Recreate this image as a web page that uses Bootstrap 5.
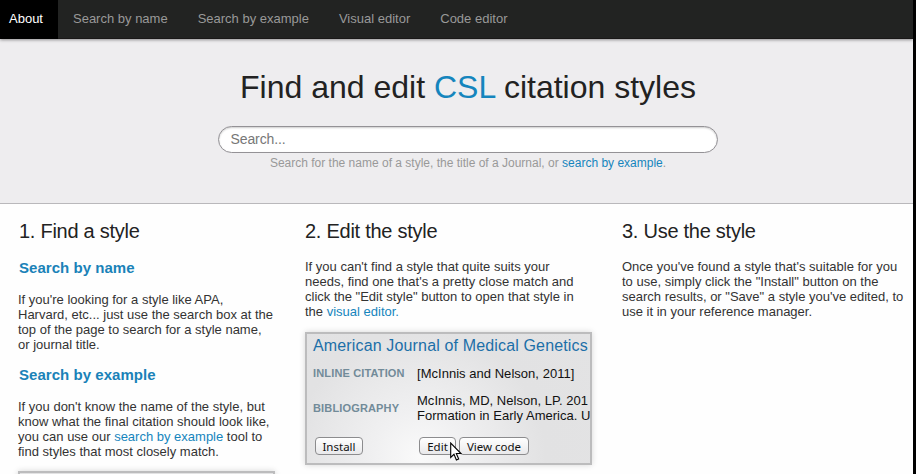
<!DOCTYPE html>
<html lang="en">
<head>
<meta charset="utf-8">
<meta name="viewport" content="width=device-width, initial-scale=1">
<title>Find and edit CSL citation styles</title>
<link href="https://cdn.jsdelivr.net/npm/bootstrap@5.3.0/dist/css/bootstrap.min.css" rel="stylesheet">
<style>
  body { font-family: "Liberation Sans", Arial, sans-serif; font-size: 13px; line-height: 15px; color: #333; background: #000; height: 474px; }
  a { color: #1585bd; text-decoration: none; }
  .page { width: 913px; height: 474px; background: #fefefe; }
  .topbar { height: 39px; background: #222322; box-shadow: 0 1px 3px rgba(0,0,0,.4); border-bottom: 1px solid #1a1818; z-index: 2; }
  .topbar .nav-link { color: #999; padding: 9px 15px 10px; line-height: 19px; white-space: nowrap; }
  .topbar .nav-link.active { color: #fff; background: #000; padding-left: 9px; height: 39px; }
  .hero { height: 165px; background: #eeedef; border-bottom: 1px solid #b9b8bb; padding: 29px 0 0 22px; }
  .hero h1 { font-size: 32px; line-height: 38px; color: #222; margin: 0 0 20px 1px; font-weight: 400; white-space: nowrap; }
  .search-box { width: 500px; height: 27px; border: 1px solid #949296; border-radius: 14px; padding: 0 11px 1px 12px; font-size: 14px; line-height: 20px; box-shadow: inset 0 1px 2px rgba(0,0,0,.2); color: #666; letter-spacing: -.1px; }
  .search-box::placeholder { color: #777; }
  .hint { font-size: 12px; line-height: 16px; color: #999; margin: 2px 0 0 1px; white-space: nowrap; }
  .steps { display: grid; grid-template-columns: 257px 287px 285px; column-gap: 30px; padding: 15px 0 0 18px; white-space: nowrap; }
  .steps h2 { font-size: 20px; line-height: 24px; margin: 0; color: #222; font-weight: 400; letter-spacing: -.26px; }
  .steps h3 { font-size: 15px; line-height: 18px; margin: 16px 0 0 1px; font-weight: 700; letter-spacing: .04px; color: #1a82b8; }
  .intro { margin: 16px 0 13px; }
  .find h2 { margin-left: 1px; }
  .find .intro { margin: 15px 0 12px; }
  .find .intro + h3 { margin-top: 14px; }
  .shot { border: 2px solid #bcbcbd; box-shadow: 0 0 6px rgba(0,0,0,.16); background: radial-gradient(circle at 40% 95%, #fafafa 0, #f0f0f1 22%, #e2e2e3 60%, #e3e3e4 100%); height: 133px; overflow: hidden; font-size: 13px; color: #111; }
  .shot-title { font-size: 16px; line-height: 20px; color: #1c6fa8; padding: 2px 0 0 6px; letter-spacing: .15px; }
  .shot-grid { display: grid; grid-template-columns: 104px 1fr; padding-left: 6px; align-items: center; letter-spacing: .03px; }
  .shot-grid.inline-row { margin-top: 10px; }
  .shot-grid.biblio-row { margin-top: 12px; }
  .field-name { font-size: 11px; font-weight: 700; color: #728b99; letter-spacing: .15px; }
  .actions { margin-top: 14px; padding-left: 8px; }
  .push { font-family: "Noto Sans", sans-serif; font-size: 11.5px; line-height: 15px; padding: 0; height: 18px; border: 1px solid #8c8c8e; border-radius: 4px; color: #111; background: linear-gradient(#fff, #e9e9eb); text-align: center; }
  .push-install { width: 48px; margin-right: 56px; }
  .push-edit { width: 37px; margin-right: 3px; }
  .push-code { width: 70px; }
  .pointer { position: absolute; left: 450px; top: 442px; z-index: 3; }
</style>
</head>
<body>
<div class="page overflow-hidden position-relative">
  <nav class="topbar nav position-relative flex-nowrap">
    <a class="nav-link active" href="#">About</a>
    <a class="nav-link" href="#">Search by name</a>
    <a class="nav-link" href="#">Search by example</a>
    <a class="nav-link" href="#">Visual editor</a>
    <a class="nav-link" href="#">Code editor</a>
  </nav>
  <header class="hero d-flex flex-column align-items-center">
    <h1>Find and edit <a href="#">CSL</a> citation styles</h1>
    <input class="search-box form-control" type="text" placeholder="Search..." aria-label="Search">
    <div class="hint">Search for the name of a style, the title of a Journal, or <a href="#">search by example</a>.</div>
  </header>
  <main class="steps">
    <section class="find">
      <h2>1. Find a style</h2>
      <h3>Search by name</h3>
      <p class="intro">If you're looking for a style like APA,<br>Harvard, etc... just use the search box at the<br>top of the page to search for a style name,<br>or journal title.</p>
      <h3>Search by example</h3>
      <p class="intro">If you don't know the name of the style, but<br>know what the final citation should look like,<br>you can use our <a href="#">search by example</a> tool to<br>find styles that most closely match.</p>
      <div class="shot"></div>
    </section>
    <section>
      <h2>2. Edit the style</h2>
      <p class="intro">If you can't find a style that quite suits your<br>needs, find one that's a pretty close match and<br>click the "Edit style" button to open that style in<br>the <a href="#">visual editor.</a></p>
      <div class="shot">
        <div class="shot-title">American Journal of Medical Genetics</div>
        <div class="shot-grid inline-row">
          <div class="field-name">INLINE CITATION</div><div>[McInnis and Nelson, 2011]</div>
        </div>
        <div class="shot-grid biblio-row">
          <div class="field-name">BIBLIOGRAPHY</div><div>McInnis, MD, Nelson, LP. 201<br>Formation in Early America. U</div>
        </div>
        <div class="actions d-flex">
          <button class="push push-install">Install</button>
          <button class="push push-edit">Edit</button>
          <button class="push push-code">View code</button>
        </div>
      </div>
    </section>
    <section>
      <h2>3. Use the style</h2>
      <p class="intro">Once you've found a style that's suitable for you<br>to use, simply click the "Install" button on the<br>search results, or "Save" a style you've edited, to<br>use it in your reference manager.</p>
    </section>
  </main>
  <svg class="pointer" width="12" height="20" viewBox="0 0 12 20"><path d="M.7 1v14.5l3.3-3.2 2.4 5.7 2.3-1-2.4-5.5H11z" fill="#fff" stroke="#000" stroke-width="1.1"/></svg>
</div>
<script src="https://cdn.jsdelivr.net/npm/bootstrap@5.3.0/dist/js/bootstrap.bundle.min.js"></script>
</body>
</html>
